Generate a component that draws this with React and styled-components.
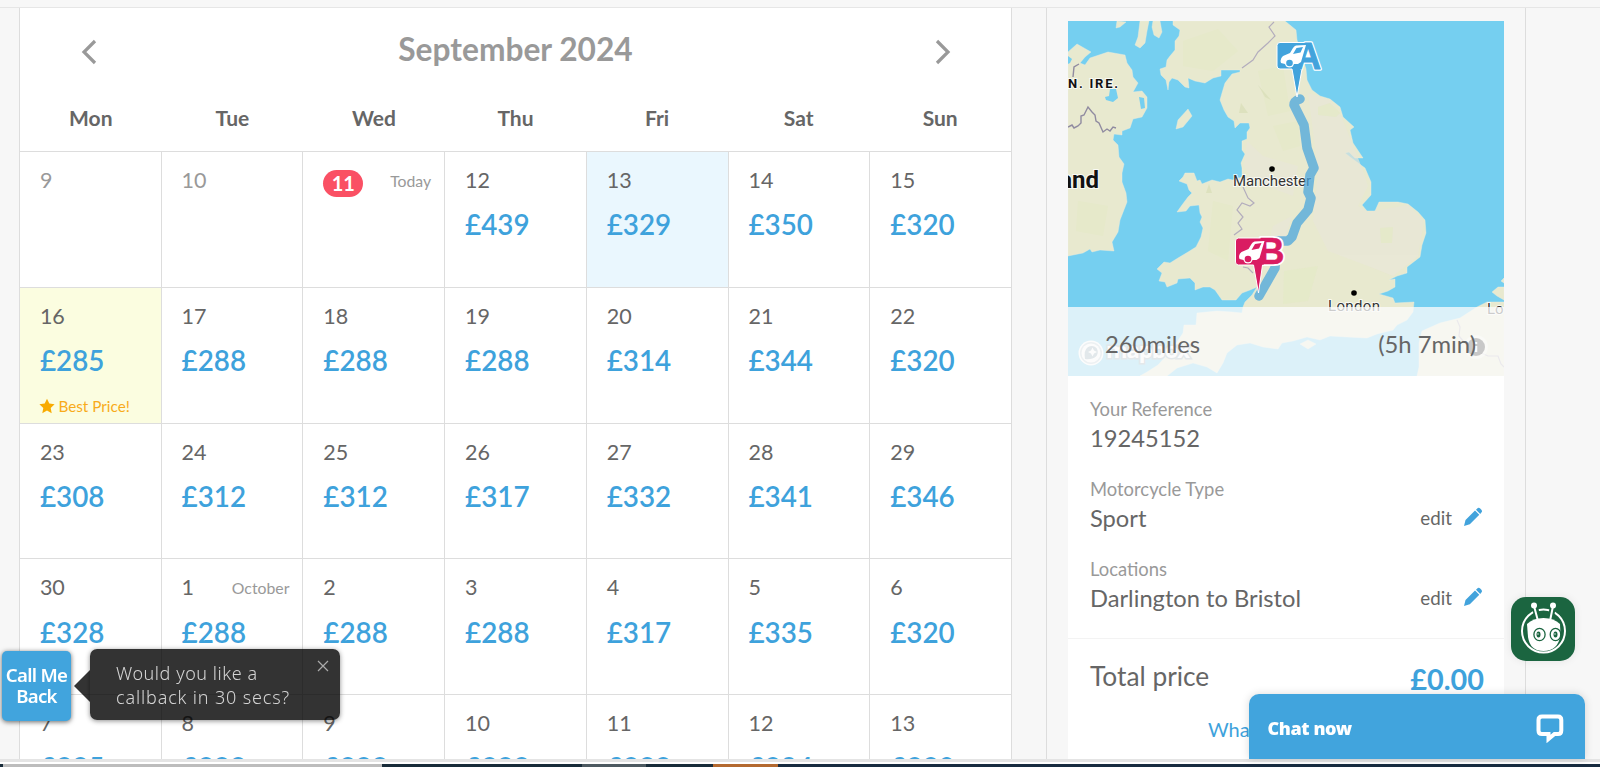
import React from "react";
import styled, { createGlobalStyle } from "styled-components";

const GlobalStyle = createGlobalStyle`
  * {
    box-sizing: border-box;
  }
  body {
    margin: 0;
    background: #f7f7f7;
    font-family: Lato, "Liberation Sans", sans-serif;
    color: #666666;
    overflow: hidden;
  }
`;

const weekDays = ["Mon", "Tue", "Wed", "Thu", "Fri", "Sat", "Sun"];

const days = [
  { day: 9, past: true },
  { day: 10, past: true },
  { day: 11, today: true, note: "Today" },
  { day: 12, price: 439 },
  { day: 13, price: 329, selected: true },
  { day: 14, price: 350 },
  { day: 15, price: 320 },
  { day: 16, price: 285, best: true },
  { day: 17, price: 288 },
  { day: 18, price: 288 },
  { day: 19, price: 288 },
  { day: 20, price: 314 },
  { day: 21, price: 344 },
  { day: 22, price: 320 },
  { day: 23, price: 308 },
  { day: 24, price: 312 },
  { day: 25, price: 312 },
  { day: 26, price: 317 },
  { day: 27, price: 332 },
  { day: 28, price: 341 },
  { day: 29, price: 346 },
  { day: 30, price: 328 },
  { day: 1, price: 288, note: "October" },
  { day: 2, price: 288 },
  { day: 3, price: 288 },
  { day: 4, price: 317 },
  { day: 5, price: 335 },
  { day: 6, price: 320 },
  { day: 7, price: 285 },
  { day: 8, price: 288 },
  { day: 9, price: 288 },
  { day: 10, price: 288 },
  { day: 11, price: 288 },
  { day: 12, price: 294 },
  { day: 13, price: 320 },
];

const details = [
  { label: "Your Reference", value: "19245152" },
  { label: "Motorcycle Type", value: "Sport", editable: true },
  { label: "Locations", value: "Darlington to Bristol", editable: true },
];

const Chevron = ({ flip }) => (
  <svg width="16" height="26" viewBox="0 0 16 26">
    <path
      d={flip ? "M2 2L13 13L2 24" : "M14 2L3 13L14 24"}
      fill="none"
      stroke="#999"
      strokeWidth="3.200"
    />
  </svg>
);

const Calendar = () => {
  return (
    <CalendarWrap>
      <MonthBar>
        <ArrowBtn>
          <Chevron />
        </ArrowBtn>
        <Month>September 2024</Month>
        <ArrowBtn>
          <Chevron flip />
        </ArrowBtn>
      </MonthBar>
      <WeekRow>
        {weekDays.map((name) => (
          <WeekDay key={name}>{name}</WeekDay>
        ))}
      </WeekRow>
      <DayGrid>
        {days.map((item, i) => (
          <DayCell key={i} $selected={item.selected} $best={item.best}>
            <DayTop>
              {item.today ? (
                <TodayBadge>{item.day}</TodayBadge>
              ) : (
                <DayNumber $past={item.past}>{item.day}</DayNumber>
              )}
              {item.note && <DayNote>{item.note}</DayNote>}
            </DayTop>
            {item.price && <Price>£{item.price}</Price>}
            {item.best && (
              <BestPrice>
                <svg width="16" height="16" viewBox="0 0 16 16">
                  <path
                    d="M8 .8l2.300 4.800 5.300.7-3.900 3.600 1 5.300L8 12.600l-4.700 2.600 1-5.300L.4 6.300l5.300-.7z"
                    fill="#f8ab00"
                  />
                </svg>
                Best Price!
              </BestPrice>
            )}
          </DayCell>
        ))}
      </DayGrid>
    </CalendarWrap>
  );
};

// van drawn once and reused by both pins
const Van = ({ color }) => (
  <g>
    <path
      d="M238 24L228 24.500Q226 25 225 27L222 32L215 35Q212.500 37 212.500 40L213 42L217 43L230 43L233 41Z"
      fill="#fff"
    />
    <path d="M228.500 27L235 26L232.500 31.500L225 33Z" fill={color} />
    <circle cx="221.500" cy="42" r="4.600" fill="#fff" />
    <circle cx="221.500" cy="42" r="3.300" fill={color} />
  </g>
);

const RouteMap = () => (
  <MapSvg viewBox="0 0 436 355">
    <rect width="436" height="355" fill="#75cff0" />
    <g fill="#e8e9cf" stroke="#f0eedd" strokeWidth=".4">
      <path d="M105 0L105 4L112 9L111 15L107 20L107 29L102 35L99 39L98 46L92 48L93 54L98 59L100 69L101 61L104 57L110 59L117 66L121 67L120 57L127 60L137 62L145 57L153 55L153 49L172 49L172 51L164 53L157 62L154 72L152 79L156 89L160 96L166 100L167 107L172 102L181 102L182 107L179 111L179 118L174 120L174 129L177 133L173 142L174 147L174 156L165 159L160 158L152 161L144 159L134 163L132 159L129 160L126 152L117 152L115 156L111 160L119 163L121 169L124 172L120 176L114 184L109 191L118 190L122 185L131 184L132 192L134 196L132 201L135 207L133 216L128 226L120 231L110 237L102 242L96 241L89 248L94 252L91 260L97 261L99 266L109 262L110 258L122 257L127 262L127 269L135 266L142 266L147 269L154 279L168 279L174 272L182 269L189 266L184 274L177 281L175 286L174 292L164 291L149 290L129 292L128 304L116 304L115 312L107 324L99 334L90 344L79 351L72 355L99 355L109 347L125 342L139 346L149 352L155 342L159 332L169 324L182 322L195 326L210 328L214 322L225 320L239 316L252 319L262 315L279 316L299 317L309 313L325 309L329 304L339 299L345 291L346 281L327 282L325 277L311 273L320 270L327 266L327 258L321 259L329 255L339 252L339 246L352 236L354 224L358 212L357 199L350 191L340 183L330 181L311 181L307 190L299 190L294 184L303 174L303 161L297 147L282 136L277 132L281 131L287 137L295 137L285 122L282 109L286 106L275 96L272 86L262 78L252 75L244 69L239 59L238 48L229 19L228 9L217 0Z" />
      <path d="M0 31L9 23L23 31L17 36L12 42L17 44L22 37L40 31L57 34L59 42L64 49L65 56L70 62L65 71L74 70L79 76L79 87L74 96L65 98L62 107L54 110L54 114L46 113L45 119L50 124L51 136L56 143L54 152L54 161L58 172L59 181L52 199L50 211L44 221L46 230L32 229L24 231L22 228L15 232L0 235Z" />
      <path d="M120 88L124 95L115 106L108 108L110 99Z" />
      <path d="M72 0L81 0L79 10L77 22L72 27L67 24L70 16Z" />
      <path d="M85 0L92 0L94 11L91 17L86 14L84 6Z" />
      <path d="M49 0L58 1L52 6L48 7Z" />
      <path d="M436 281L419 281L409 286L392 297L372 302L354 310L351 322L351 346L349 355L436 355Z" />
      <path d="M436 266L430 266L424 271L429 275L436 279ZM436 257L433 260L436 262Z" />
      <path d="M232 323L240 319L248 323L240 328Z" />
    </g>
    {/* forest and moor tints */}
    <g fill="#e4eac4" opacity=".45">
      <path d="M115 20L150 8L170 30L145 50L115 45Z" />
      <path d="M190 50L215 45L222 90L200 95Z" />
      <path d="M205 105L230 100L232 125L215 130Z" />
      <path d="M145 180L165 185L160 240L140 230Z" />
      <path d="M10 180L40 185L35 215L8 210Z" />
    </g>
    <g fill="#e9e7d8" opacity=".7">
      <path d="M179 120L195 135L230 145L225 175L185 160L176 145Z" />
      <path d="M205 205L224 195L215 225L200 222Z" />
      <path d="M240 72L262 79L274 97L284 122L294 147L300 165L290 185L300 191L340 184L356 200L350 235L325 255L300 245L260 230L245 200L250 150Z" />
    </g>
    <g fill="#e4eac6" opacity=".7">
      <path d="M250 86L262 82L272 92L268 96L250 94Z" />
      <path d="M312 207L325 206L324 222L313 222Z" />
      <path d="M216 250L250 245L240 280L215 283Z" />
    </g>
    <g fill="#d9dfb8" opacity=".7">
      <path d="M190 64L203 79L197 76Z" />
      <path d="M173 82L180 92L171 92Z" />
      <path d="M141 163L144 172L138 172Z" />
    </g>
    <g fill="#75cff0">
      <path d="M37 76L41 75L42 68L48 68L50 77L45 81L38 79Z" />
      <path d="M71 76L76 77L77 87L73 88Z" />
      <path d="M0 35L4 38L2 42L0 43Z" />
    </g>
    <g fill="none" stroke="#b3adbd" strokeWidth="1.200">
      <path d="M206 1L201 6L207 15L200 22L190 31L185 39L174 47" />
      <path d="M175 166L180 177L186 182L182 185L174 182L169 189L175 196L170 202L174 208L166 214M175 246L180 247L185 252" />
      <path d="M389 299L392 306L391 315L400 326L420 335L430 335L433 343L436 346" />
    </g>
    <path
      d="M0 106L4 104L6 107L10 105L13 102L13 95L16 94L20 86L24 91L27 94L28 100L31 102L35 111L39 108L42 110L45 106L48 107M11 43L6 46L5 56"
      fill="none"
      stroke="#908ba0"
      strokeWidth="1.400"
    />
    <MapLabel x="204" y="165" textAnchor="middle" textLength="78">
      Manchester
    </MapLabel>
    <circle cx="204" cy="148" r="2.800" fill="#000" />
    <MapLabel x="286" y="290" textAnchor="middle" textLength="52">
      London
    </MapLabel>
    <circle cx="286" cy="272" r="2.800" fill="#000" />
    <MapLabel x="419" y="293">Lo</MapLabel>
    <MapLabel x="0" y="67" $size={13} $bold textLength="50">
      N. IRE.
    </MapLabel>
    <MapLabel x="31" y="167" $size={24} $bold textAnchor="end">
      Ireland
    </MapLabel>
    <path
      d="M232 78Q226 80 226 84L236 104L239 127L246 147L242 154L240 171L243 177L240 189L229 202L224 216L220 220L208 220L207 247L191 275"
      fill="none"
      stroke="#4ba6dc"
      strokeOpacity=".75"
      strokeWidth="9.500"
      strokeLinecap="round"
      strokeLinejoin="round"
    />
    <g>
      <PinLetter x="227" y="47.500" fill="#fff" stroke="#fff" $outline={3.5}>
        A
      </PinLetter>
      <path
        d="M212 21.500H240L232 48H234L229 76L224 48H212Q209 48 209 45V24.500Q209 21.500 212 21.500Z"
        fill="#42a3dc"
        stroke="#fff"
        strokeWidth="1"
      />
      <path d="M241 27L246 41H236Z" fill="#fff" />
      <PinLetter x="227" y="47.500" fill="#42a3dc" stroke="#42a3dc" $outline={1}>
        A
      </PinLetter>
      <Van color="#42a3dc" />
    </g>
    <g transform="translate(-41.500 196)">
      <PinLetter x="232" y="47" fill="#fff" stroke="#fff" $outline={4} $size={36}>
        B
      </PinLetter>
      <path
        d="M212 21H238V48H236L232 76L227 48H212Q209 48 209 45V24Q209 21 212 21Z"
        fill="#da1c62"
        stroke="#fff"
        strokeWidth="1"
      />
      <path d="M238 23H250V46H238Z" fill="#fff" />
      <PinLetter x="232" y="47" fill="#da1c62" stroke="#da1c62" $outline={0.5} $size={36}>
        B
      </PinLetter>
      <Van color="#da1c62" />
    </g>
    <g>
      <circle cx="23" cy="332" r="12.500" fill="#fff" />
      <circle cx="23" cy="332" r="11" fill="#bccdd5" />
      <circle cx="23" cy="332" r="9.500" fill="#fff" />
      <path
        d="M17 338Q15.500 329 20 326Q25 323.500 28.500 327Q31 331 28.500 335Q24 339 17 338Z"
        fill="#8fa9b5"
      />
      <path
        d="M24.500 326.500L26 329.500L29 331L26 332.500L24.500 335.500L23 332.500L20 331L23 329.500Z"
        fill="#fff"
      />
      <MapboxText x="38" y="337" textLength="84">
        mapbox
      </MapboxText>
    </g>
    <circle cx="408" cy="326" r="12" fill="#fff" opacity=".5" />
    <circle cx="408" cy="326" r="9" fill="#222" />
    <path d="M408 325V331M408 321V323" stroke="#fff" strokeWidth="2.500" />
  </MapSvg>
);

const Pencil = () => (
  <svg width="20" height="20" viewBox="0 0 20 20">
    <path
      d="M1 19L2.500 13L12 3.600L16.300 7.800L6.800 17.200ZM13 2.700L14.800 1Q16 .4 17.500 1.700L18.600 2.900Q19.500 4.200 18.600 5.300L17.200 6.900Z"
      fill="#42a3dc"
    />
  </svg>
);

const Summary = () => {
  return (
    <Aside>
      <MapBox>
        <RouteMap />
        <Distance>
          <span>260miles</span>
          <span>(5h 7min)</span>
        </Distance>
      </MapBox>
      <DetailCard>
        {details.map((row) => (
          <Detail key={row.label}>
            <DetailLabel>{row.label}</DetailLabel>
            <DetailLine>
              <DetailValue>{row.value}</DetailValue>
              {row.editable && (
                <EditLink>
                  edit
                  <Pencil />
                </EditLink>
              )}
            </DetailLine>
          </Detail>
        ))}
        <TotalRow>
          <TotalLabel>Total price</TotalLabel>
          <TotalPrice>£0.00</TotalPrice>
        </TotalRow>
        <IncludedLink>What's included?</IncludedLink>
      </DetailCard>
    </Aside>
  );
};

const RobotButton = () => (
  <Robot>
    <svg width="64" height="64" viewBox="0 0 64 64">
      <circle cx="32.500" cy="34" r="21.500" fill="none" stroke="#fff" strokeWidth="2" />
      <path d="M24 9L27 25M42 9L39 25" stroke="#1b6540" strokeWidth="6" />
      <path d="M23 9L27 24M42 9L39 24" stroke="#fff" strokeWidth="2" />
      <circle cx="23" cy="8.500" r="3" fill="#fff" />
      <circle cx="42" cy="8.500" r="3" fill="#fff" />
      <path
        d="M16 27Q22 21 32.500 21Q43 21 49 27L49.500 38Q47 54 32.500 54Q19 54 17 40Z"
        fill="#fff"
      />
      <g fill="none" stroke="#1b6540" strokeWidth="1.300">
        <ellipse cx="28.500" cy="37.500" rx="5.600" ry="6.200" />
        <ellipse cx="44.500" cy="37.500" rx="5.300" ry="6.200" />
      </g>
      <ellipse cx="27.500" cy="37.500" rx="2" ry="2.900" fill="#1b6540" />
      <ellipse cx="44.500" cy="37.500" rx="2" ry="2.900" fill="#1b6540" />
      <circle cx="27" cy="37" r=".7" fill="#fff" />
      <circle cx="44" cy="37" r=".7" fill="#fff" />
    </svg>
  </Robot>
);

const App = () => {
  return (
    <>
      <GlobalStyle />
      <Page>
        <Columns>
          <Calendar />
          <Summary />
        </Columns>
        <PageEdge />
        <TaskStrip>
          <StripPart $w={3} />
          <StripPart $w={379} $color="#bcbcbc" />
          <StripPart $w={200} />
          <StripPart $w={64} $color="#4d5a61" />
          <StripPart $w={67} />
          <StripPart $w={65} $color="#b3692f" />
        </TaskStrip>
      </Page>
      <CallMe>
        Call Me
        <br />
        Back
      </CallMe>
      <Callback>
        <CallbackArrow />
        <CallbackLine $spacing={0.55}>Would you like a</CallbackLine>
        <CallbackLine $spacing={0.85}>callback in 30 secs?</CallbackLine>
        <CloseBtn>
          <svg width="12" height="12" viewBox="0 0 12 12">
            <path d="M1 1L11 11M11 1L1 11" stroke="#aaa" strokeWidth="1.200" />
          </svg>
        </CloseBtn>
      </Callback>
      <RobotButton />
      <ChatBar>
        Chat now
        <svg width="30" height="30" viewBox="0 0 30 30">
          <path
            d="M7 3.500H23Q26.300 3.500 26.300 7V17.500Q26.300 21 23 21H19.500L13.500 26V21H7Q3.500 21 3.500 17.500V7Q3.500 3.500 7 3.500Z"
            fill="none"
            stroke="#fff"
            strokeWidth="4"
          />
        </svg>
      </ChatBar>
    </>
  );
};

const Page = styled.div`
  height: 767px;
  display: flex;
  flex-direction: column;
  overflow: hidden;
  padding-top: 7px;
`;

const Columns = styled.div`
  height: 752px;
  display: flex;
  gap: 34px;
  padding-left: 19px;
  border-top: 1px solid #e6e6e6;
  overflow: hidden;
`;

const CalendarWrap = styled.div`
  width: 993px;
  flex: none;
  background: #ffffff;
  border-left: 1px solid #dddddd;
  border-right: 1px solid #dddddd;
`;

const MonthBar = styled.div`
  display: flex;
  justify-content: space-between;
  align-items: center;
  height: 61px;
  padding: 21px 60.5px 0 60.5px;
`;

const Month = styled.div`
  font-size: 31.7px;
  line-height: 40px;
  font-weight: 700;
  color: #999999;
`;

const ArrowBtn = styled.div`
  height: 26px;
  margin-top: 6px;
`;

const WeekRow = styled.div`
  display: grid;
  grid-template-columns: repeat(7, 1fr);
  height: 83px;
  padding-top: 36px;
  border-bottom: 1px solid #dddddd;
`;

const WeekDay = styled.div`
  text-align: center;
  font-size: 21px;
  line-height: 26px;
  font-weight: 700;
`;

const DayGrid = styled.div`
  display: grid;
  grid-template-columns: repeat(7, 1fr);
  grid-auto-rows: 135.8px;
  margin-left: -1px;
`;

const DayCell = styled.div`
  padding: 16.1px 13px 0 19.9px;
  border-bottom: 1px solid #dddddd;
  border-left: 1px solid #dddddd;
  background: ${({ $selected, $best }) =>
    $selected ? "#eaf7fe" : $best ? "#fbfde0" : "#ffffff"};
`;

const DayTop = styled.div`
  display: flex;
  justify-content: space-between;
  height: 25px;
`;

const DayNumber = styled.div`
  font-size: 21.5px;
  line-height: 25px;
  color: ${({ $past }) => ($past ? "#999999" : "#666666")};
`;

const TodayBadge = styled.div`
  width: 40px;
  height: 27px;
  margin-top: 2px;
  border-radius: 14px;
  background: #fa5064;
  color: #ffffff;
  font-size: 20px;
  line-height: 27px;
  font-weight: 700;
  text-align: center;
`;

const DayNote = styled.div`
  font-size: 15.8px;
  line-height: 25px;
  color: #999999;
`;

const Price = styled.div`
  margin-top: 15.2px;
  font-size: 27.8px;
  line-height: 34px;
  font-weight: 600;
  color: #3ea2dc;
`;

const BestPrice = styled.div`
  display: flex;
  align-items: center;
  gap: 3px;
  margin-top: 18.2px;
  margin-left: -0.5px;
  font-size: 15.3px;
  line-height: 20px;
  color: #f8ab1a;
  white-space: nowrap;
`;

const Aside = styled.div`
  width: 480px;
  flex: none;
  padding: 13px 21px 0 21px;
  border-left: 1px solid #dddddd;
  border-right: 1px solid #dddddd;
`;

const MapBox = styled.div`
  position: relative;
  height: 355px;
`;

const MapSvg = styled.svg`
  display: block;
  width: 436px;
  height: 355px;
`;

const MapLabel = styled.text`
  font-family: Roboto, sans-serif;
  font-size: ${({ $size }) => $size || 15}px;
  font-weight: ${({ $bold }) => ($bold ? 700 : 400)};
  fill: ${({ $bold }) => ($bold ? "#111111" : "#333333")};
  stroke: #ffffff;
  stroke-width: 2px;
  stroke-opacity: 0.8;
  paint-order: stroke;
`;

const PinLetter = styled.text`
  font-family: "Liberation Sans", sans-serif;
  font-size: ${({ $size }) => $size || 36}px;
  font-weight: 700;
  stroke-width: ${({ $outline }) => $outline}px;
  stroke-linejoin: round;
`;

const MapboxText = styled.text`
  font-family: "Open Sans", sans-serif;
  font-size: 22px;
  font-weight: 700;
  fill: #ffffff;
  stroke: #93a8b2;
  stroke-width: 3px;
  paint-order: stroke;
`;

/* sits on top of the bottom of the map */
const Distance = styled.div`
  position: absolute;
  left: 0;
  right: 0;
  bottom: 0;
  height: 69px;
  padding: 4px 28px 0 37px;
  display: flex;
  align-items: center;
  justify-content: space-between;
  font-size: 23.8px;
  background: rgba(251, 251, 251, 0.77);
`;

const DetailCard = styled.div`
  height: 400px;
  width: 436px;
  padding-top: 19.5px;
  background: #ffffff;
`;

const Detail = styled.div`
  height: 80px;
  padding: 0 21px 0 22px;
`;

const DetailLabel = styled.div`
  font-size: 18.4px;
  line-height: 26px;
  color: #999999;
`;

const DetailLine = styled.div`
  display: flex;
  justify-content: space-between;
  align-items: center;
  height: 33px;
`;

const DetailValue = styled.div`
  font-size: 23.7px;
  line-height: 33px;
`;

const EditLink = styled.div`
  display: flex;
  align-items: center;
  gap: 11px;
  padding-bottom: 2px;
  font-size: 18.8px;
`;

const TotalRow = styled.div`
  display: flex;
  justify-content: space-between;
  margin-top: 2.5px;
  padding: 21px 20px 0 22px;
  border-top: 1px solid #f3f3f3;
`;

const TotalLabel = styled.div`
  font-size: 26.3px;
  line-height: 33px;
`;

const TotalPrice = styled.div`
  font-size: 28.8px;
  line-height: 38px;
  font-weight: 700;
  color: #3ea2dc;
`;

const IncludedLink = styled.div`
  padding: 16px 0 0 140px;
  font-size: 20px;
  line-height: 30px;
  color: #3ea2dc;
`;

const PageEdge = styled.div`
  height: 5px;
  flex: none;
  background: #ffffff;
  border-top: 3px solid #e4e4e4;
`;

const TaskStrip = styled.div`
  height: 3px;
  display: flex;
  background: #182c40;
`;

const StripPart = styled.div`
  width: ${({ $w }) => $w}px;
  background: ${({ $color }) => $color || "#182c3a"};
`;

const CallMe = styled.div`
  position: fixed;
  left: 2px;
  top: 651px;
  width: 69px;
  height: 70px;
  padding-top: 13px;
  border-radius: 5px;
  background: #41a4dd;
  box-shadow: 0 1px 5px rgba(0, 0, 0, 0.6);
  color: #ffffff;
  font-family: "Noto Sans", sans-serif;
  font-size: 18.6px;
  font-weight: 600;
  letter-spacing: -0.7px;
  line-height: 21px;
  text-align: center;
  white-space: nowrap;
`;

const Callback = styled.div`
  position: fixed;
  left: 90px;
  top: 649px;
  width: 250px;
  height: 71px;
  padding: 12px 0 0 26px;
  border-radius: 7px;
  background: rgba(0, 0, 0, 0.8);
  box-shadow: 0 1px 5px rgba(0, 0, 0, 0.45);
`;

const CallbackArrow = styled.div`
  position: absolute;
  left: -16px;
  top: 21px;
  border: 16px solid transparent;
  border-left: none;
  border-right-color: rgba(0, 0, 0, 0.8);
`;

const CallbackLine = styled.div`
  color: #d4d4d4;
  font-family: "Noto Sans", sans-serif;
  font-weight: 300;
  font-size: 18px;
  line-height: 24px;
  letter-spacing: ${({ $spacing }) => $spacing}px;
  white-space: nowrap;
`;

const CloseBtn = styled.div`
  position: absolute;
  right: 11px;
  top: 11px;
  line-height: 0;
`;

const Robot = styled.div`
  position: fixed;
  left: 1511px;
  top: 597px;
  width: 64px;
  height: 64px;
  border-radius: 15px;
  background: #1b6540;
  box-shadow: 0 0 8px rgba(0, 0, 0, 0.08);
`;

const ChatBar = styled.div`
  position: fixed;
  left: 1249px;
  top: 694px;
  width: 336px;
  height: 65px;
  padding: 3px 20px 0 18.5px;
  display: flex;
  align-items: center;
  justify-content: space-between;
  border-radius: 10px 10px 0 0;
  background: #41a4dd;
  box-shadow: 0 0 8px rgba(0, 0, 0, 0.15);
  color: #ffffff;
  font-family: "Noto Sans", sans-serif;
  font-size: 18px;
  font-weight: 900;
  letter-spacing: -0.4px;
`;

export default App;
